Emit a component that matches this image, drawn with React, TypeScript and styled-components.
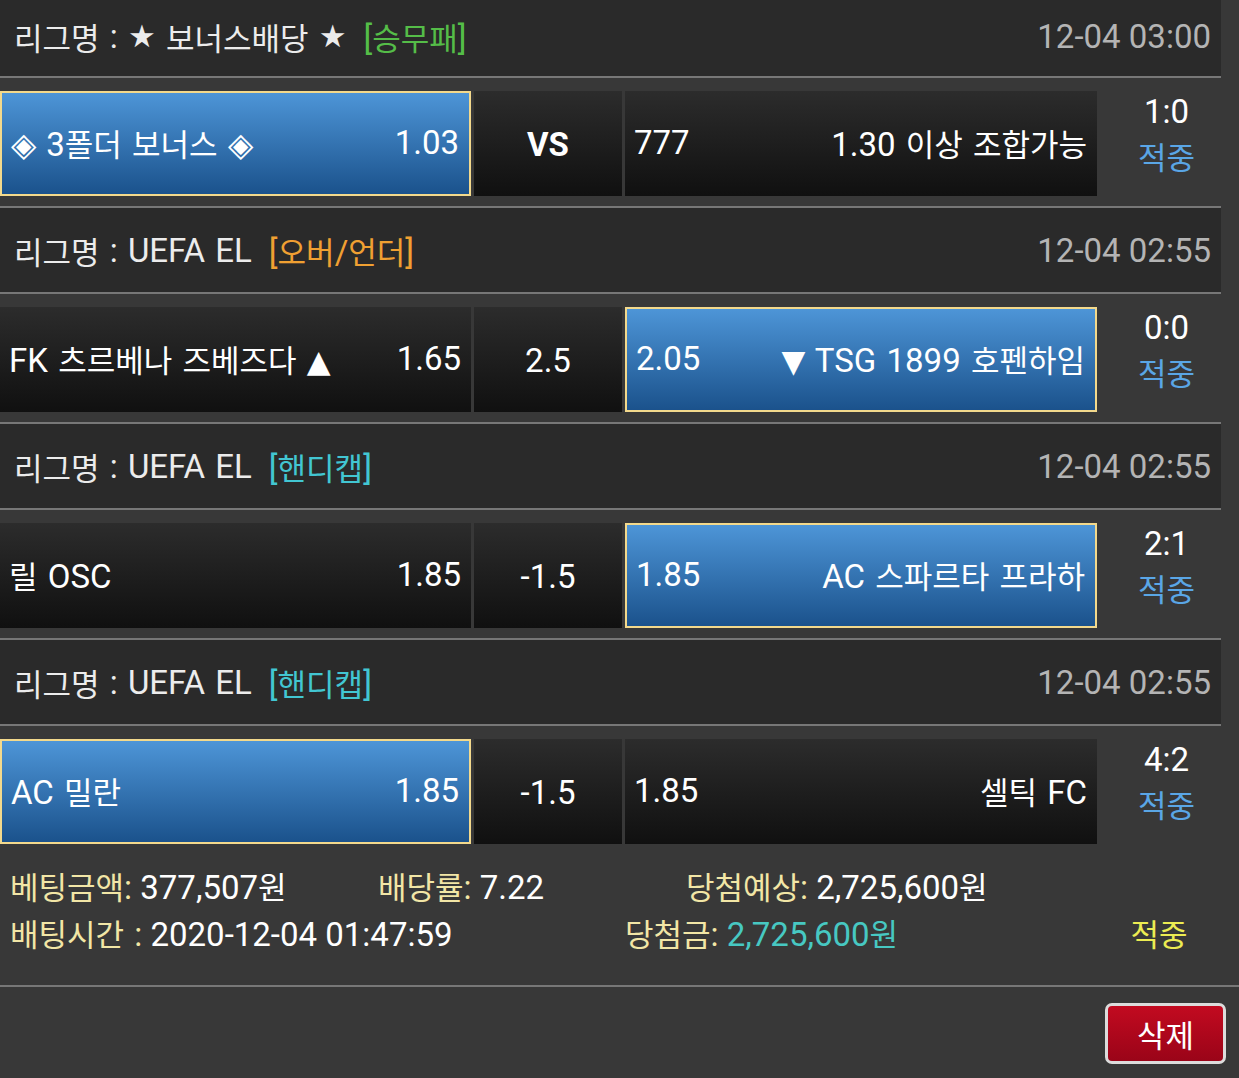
import React from "react";
import styled, { createGlobalStyle, css } from "styled-components";

const Global = createGlobalStyle`
  html, body { margin: 0; padding: 0; background: #383838; }
  body { font-family: Roboto, "Noto Sans CJK KR", "Liberation Sans", sans-serif; color: #fff; }
  * { box-sizing: border-box; }
`;

const Hangul = styled.span`
  font-size: 31px;
`;

const Sym = styled.span`
  font-family: "DejaVu Sans", sans-serif;
  font-size: 31px;
`;

const Latin = styled.span`
  word-spacing: 2px;
`;

const Txt = ({ children }: { children: string }) => {
  const parts = children.split(/([\uAC00-\uD7A3]+|[▲▼★])/).filter(Boolean);
  return (
    <>
      {parts.map((p, i) =>
        /[\uAC00-\uD7A3]/.test(p) ? (
          <Hangul key={i}>{p}</Hangul>
        ) : /[▲▼★]/.test(p) ? (
          <Sym key={i}>{p}</Sym>
        ) : (
          <Latin key={i}>{p}</Latin>
        )
      )}
    </>
  );
};

const Page = styled.div`
  width: 1239px;
  height: 1078px;
  background: #383838;
  overflow: hidden;
`;

const List = styled.div`
  width: 1221px;
  display: flex;
  flex-direction: column;
`;

const Header = styled.div<{ $cut?: boolean }>`
  height: ${(p) => (p.$cut ? 76 : 84)}px;
  padding: ${(p) => (p.$cut ? "0 10px 4px 14px" : "0 10px 0 14px")};
  background: #2a2a2a;
  display: flex;
  align-items: center;
  justify-content: space-between;
  font-size: 33px;
  color: #ececec;
`;

const League = styled.div`
  display: flex;
  align-items: center;
  white-space: pre;
`;

const tagColors: Record<string, string> = {
  green: "#55bd48",
  orange: "#f0a032",
  cyan: "#42c6d2",
};

const Tag = styled.span<{ $tone: string }>`
  margin-left: 17px;
  color: ${(p) => tagColors[p.$tone]};
`;

const Time = styled.div`
  color: #b4b4b4;
`;

const Line = styled.div`
  height: 2px;
  background: #777;
`;

const Row = styled.div`
  height: 128px;
  padding: 13px 0 10px;
  display: flex;
  gap: 3px;
  align-items: stretch;
`;

const cellBase = css<{ $sel?: boolean }>`
  height: 105px;
  display: flex;
  align-items: center;
  font-size: 33px;
  color: #fff;
  background: linear-gradient(#2c2c2c, #101010);
  ${(p) =>
    p.$sel &&
    css`
      background: linear-gradient(#4d95d7, #1b528c);
      border: 2px solid #f3d98c;
    `}
`;

const SideCell = styled.div<{ $sel?: boolean; $w: number }>`
  ${cellBase};
  width: ${(p) => p.$w}px;
  justify-content: space-between;
  padding: 0 10px 2px 9px;
  white-space: pre;
`;

const MidCell = styled.div<{ $bold?: boolean }>`
  ${cellBase};
  width: 148px;
  justify-content: center;
  padding-top: 2px;
  font-weight: ${(p) => (p.$bold ? 700 : 400)};
`;

const Result = styled.div`
  flex: 1;
  display: flex;
  flex-direction: column;
  align-items: center;
  justify-content: center;
  padding: 0 0 16px 12px;
  font-size: 33px;
  line-height: 46px;
`;

const Score = styled.div`
  color: #fff;
`;

const Hit = styled.div`
  color: #5aa6e6;
`;

const Footer = styled.div`
  padding: 11px 0 26px 10px;
  font-size: 33px;
  line-height: 46px;
`;

const FooterRow = styled.div<{ $cols: string }>`
  display: grid;
  grid-template-columns: ${(p) => p.$cols};
  white-space: pre;
`;

const Label = styled.span`
  color: #f2e6a6;
`;

const Value = styled.span<{ $cyan?: boolean }>`
  color: ${(p) => (p.$cyan ? "#47c8c2" : "#fff")};
`;

const FooterHit = styled.div`
  color: #ecec52;
  text-align: center;
`;

const FullLine = styled.div`
  height: 2px;
  background: #777;
`;

const Actions = styled.div`
  display: flex;
  justify-content: flex-end;
  padding: 16px 13px 0 0;
`;

const DeleteBtn = styled.button`
  width: 121px;
  height: 61px;
  border: 3px solid #dcdcdc;
  border-radius: 7px;
  background: linear-gradient(#c20a20, #9a0418);
  color: #fff;
  font-family: Roboto, "Noto Sans CJK KR", sans-serif;
  font-size: 31px;
  padding: 0;
  cursor: pointer;
`;

type Bet = {
  league: string;
  tag: string;
  tone: string;
  time: string;
  home: string;
  homeOdds: string;
  mid: string;
  away: string;
  awayOdds: string;
  pick: "home" | "away";
  score: string;
};

const bets: Bet[] = [
  {
    league: "리그명 : ★ 보너스배당 ★",
    tag: "[승무패]",
    tone: "green",
    time: "12-04 03:00",
    home: "◈ 3폴더 보너스 ◈",
    homeOdds: "1.03",
    mid: "VS",
    away: "1.30 이상 조합가능",
    awayOdds: "777",
    pick: "home",
    score: "1:0",
  },
  {
    league: "리그명 : UEFA EL",
    tag: "[오버/언더]",
    tone: "orange",
    time: "12-04 02:55",
    home: "FK 츠르베나 즈베즈다 ▲",
    homeOdds: "1.65",
    mid: "2.5",
    away: "▼ TSG 1899 호펜하임",
    awayOdds: "2.05",
    pick: "away",
    score: "0:0",
  },
  {
    league: "리그명 : UEFA EL",
    tag: "[핸디캡]",
    tone: "cyan",
    time: "12-04 02:55",
    home: "릴 OSC",
    homeOdds: "1.85",
    mid: "-1.5",
    away: "AC 스파르타 프라하",
    awayOdds: "1.85",
    pick: "away",
    score: "2:1",
  },
  {
    league: "리그명 : UEFA EL",
    tag: "[핸디캡]",
    tone: "cyan",
    time: "12-04 02:55",
    home: "AC 밀란",
    homeOdds: "1.85",
    mid: "-1.5",
    away: "셀틱 FC",
    awayOdds: "1.85",
    pick: "home",
    score: "4:2",
  },
];

export default function App() {
  return (
    <Page>
      <Global />
      <List>
        {bets.map((b, i) => (
          <React.Fragment key={i}>
            <Header $cut={i === 0}>
              <League>
                <Txt>{b.league}</Txt>
                <Tag $tone={b.tone}>
                  <Txt>{b.tag}</Txt>
                </Tag>
              </League>
              <Time>{b.time}</Time>
            </Header>
            <Line />
            <Row>
              <SideCell $w={471} $sel={b.pick === "home"}>
                <span>
                  <Txt>{b.home}</Txt>
                </span>
                <span>{b.homeOdds}</span>
              </SideCell>
              <MidCell $bold={b.mid === "VS"}>{b.mid}</MidCell>
              <SideCell $w={472} $sel={b.pick === "away"}>
                <span>{b.awayOdds}</span>
                <span>
                  <Txt>{b.away}</Txt>
                </span>
              </SideCell>
              <Result>
                <Score>{b.score}</Score>
                <Hit>
                  <Txt>적중</Txt>
                </Hit>
              </Result>
            </Row>
            {i < bets.length - 1 && <Line />}
          </React.Fragment>
        ))}
      </List>
      <Footer>
        <FooterRow $cols="368px 308px 1fr">
          <div>
            <Label>
              <Txt>베팅금액:</Txt>
            </Label>{" "}
            <Value>
              <Txt>377,507원</Txt>
            </Value>
          </div>
          <div>
            <Label>
              <Txt>배당률:</Txt>
            </Label>{" "}
            <Value>7.22</Value>
          </div>
          <div>
            <Label>
              <Txt>당첨예상:</Txt>
            </Label>{" "}
            <Value>
              <Txt>2,725,600원</Txt>
            </Value>
          </div>
        </FooterRow>
        <FooterRow $cols="615px 472px 124px">
          <div>
            <Label>
              <Txt>배팅시간 :</Txt>
            </Label>{" "}
            <Value>2020-12-04 01:47:59</Value>
          </div>
          <div>
            <Label>
              <Txt>당첨금:</Txt>
            </Label>{" "}
            <Value $cyan>
              <Txt>2,725,600원</Txt>
            </Value>
          </div>
          <FooterHit>
            <Txt>적중</Txt>
          </FooterHit>
        </FooterRow>
      </Footer>
      <FullLine />
      <Actions>
        <DeleteBtn>삭제</DeleteBtn>
      </Actions>
    </Page>
  );
}
